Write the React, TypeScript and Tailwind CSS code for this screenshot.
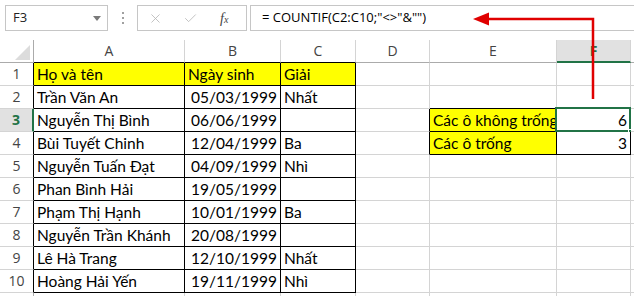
import { X, Check } from 'lucide-react'

const rows: [string, string, string][] = [
  ['Họ và tên', 'Ngày sinh', 'Giải'],
  ['Trần Văn An', '05/03/1999', 'Nhất'],
  ['Nguyễn Thị Bình', '06/06/1999', ''],
  ['Bùi Tuyết Chinh', '12/04/1999', 'Ba'],
  ['Nguyễn Tuấn Đạt', '04/09/1999', 'Nhì'],
  ['Phan Bình Hải', '19/05/1999', ''],
  ['Phạm Thị Hạnh', '10/01/1999', 'Ba'],
  ['Nguyễn Trần Khánh', '20/08/1999', ''],
  ['Lê Hà Trang', '12/10/1999', 'Nhất'],
  ['Hoàng Hải Yến', '19/11/1999', 'Nhì'],
]

const cols = ['A', 'B', 'C', 'D', 'E', 'F', '']

const cellFont = { fontFamily: 'Lato, "Noto Sans", sans-serif' }

function Cell({
  children,
  right = false,
  yellow = false,
  blackR = false,
  blackB = false,
  clip = false,
}: {
  children?: React.ReactNode
  right?: boolean
  yellow?: boolean
  blackR?: boolean
  blackB?: boolean
  clip?: boolean
}) {
  return (
    <div
      className={[
        'relative flex h-[23px] items-end whitespace-nowrap border-r border-b px-[3px] text-[15.5px] leading-[21px] text-black',
        right ? 'justify-end' : 'justify-start',
        yellow ? 'bg-[#ffff00]' : 'bg-white',
        blackR ? 'border-r-black' : 'border-r-[#d4d4d4]',
        blackB ? 'border-b-black' : 'border-b-[#d4d4d4]',
        clip ? 'overflow-hidden' : '',
      ].join(' ')}
      style={cellFont}
    >
      {children}
    </div>
  )
}

function RowHeader({ n, active = false, dark = false }: { n?: number; active?: boolean; dark?: boolean }) {
  return (
    <div
      className={[
        'flex h-[23px] items-center justify-center border-b border-b-[#d4d4d4] text-[14px] leading-none',
        active
          ? 'border-r-2 border-r-[#217346] bg-[#e1e1e1] font-bold text-[#217346]'
          : 'border-r bg-white text-[#444]',
        !active && dark ? 'border-r-black' : '',
        !active && !dark ? 'border-r-[#ababab]' : '',
      ].join(' ')}
      style={{ fontFamily: '"Open Sans", sans-serif' }}
    >
      {n}
    </div>
  )
}

export default function App() {
  return (
    <div className="relative h-[296px] w-[634px] overflow-hidden bg-white">
      {/* formula bar */}
      <div className="flex h-[40px] items-start pt-[5px] text-[#222]" style={{ fontFamily: '"Open Sans", sans-serif' }}>
        <div className="ml-[5px] flex h-[26px] w-[103px] items-center justify-between border border-[#c6c6c6] pl-[7px] pr-[6px] text-[13px]">
          <span>F3</span>
          <svg width="8" height="5" viewBox="0 0 8 5">
            <path d="M0 0 H8 L4 5 Z" fill="#7a7a7a" />
          </svg>
        </div>
        <div className="flex h-[26px] w-[29px] flex-col items-center justify-center gap-[3px]">
          <span className="h-[2px] w-[2px] bg-[#a0a0a0]" />
          <span className="h-[2px] w-[2px] bg-[#a0a0a0]" />
          <span className="h-[2px] w-[2px] bg-[#a0a0a0]" />
        </div>
        <div className="flex h-[26px] w-[110px] items-center border border-[#c6c6c6] pl-[10px]">
          <X size={15} strokeWidth={1.3} className="text-[#b5b5b5]" />
          <Check size={15} strokeWidth={1.3} className="ml-[20px] text-[#b5b5b5]" />
          <span
            className="ml-[22px] text-[14px] italic text-[#444]"
            style={{ fontFamily: '"Liberation Serif", serif' }}
          >
            f<span className="text-[10px]">x</span>
          </span>
        </div>
        <div className="ml-[3px] flex h-[26px] flex-1 items-center border-y border-l border-[#c6c6c6] pl-[11px] text-[13px] text-black">
          = COUNTIF(C2:C10;"&lt;&gt;"&amp;"")
        </div>
      </div>

      {/* sheet */}
      <div className="grid grid-cols-[34px_151px_96px_75px_74px_127px_74px_1fr]">
        {/* corner */}
        <div className="flex h-[23px] items-end justify-end border-r border-b border-r-[#ababab] border-b-[#ababab] pb-[2px] pr-[3px]">
          <svg width="15" height="15" viewBox="0 0 15 15">
            <path d="M15 0 V15 H0 Z" fill="#dcdcdc" />
          </svg>
        </div>
        {cols.map((c, i) => (
          <div
            key={i}
            className={[
              'flex h-[23px] items-center justify-center border-r border-r-[#d4d4d4] text-[14px] leading-none',
              c === 'F'
                ? 'border-b-2 border-b-[#217346] bg-[#e1e1e1] font-bold text-[#217346]'
                : 'border-b bg-white text-[#444]',
              c !== 'F' && i < 3 ? 'border-b-black' : '',
              c !== 'F' && i >= 3 ? 'border-b-[#ababab]' : '',
            ].join(' ')}
            style={{ fontFamily: '"Open Sans", sans-serif' }}
          >
            {c}
          </div>
        ))}

        {rows.map((r, idx) => {
          const n = idx + 1
          return (
            <div key={n} className="contents">
              <RowHeader n={n} active={n === 3} dark />
              <Cell yellow={n === 1} blackR blackB>
                {r[0]}
              </Cell>
              <Cell yellow={n === 1} right={n !== 1} blackR blackB>
                {r[1]}
              </Cell>
              <Cell yellow={n === 1} blackR blackB>
                {r[2]}
              </Cell>
              <Cell blackR={n === 3 || n === 4} />
              <Cell clip yellow={n === 3 || n === 4} blackR={n === 3 || n === 4} blackB={n >= 2 && n <= 4}>
                {n === 3 ? 'Các ô không trống' : n === 4 ? 'Các ô trống' : ''}
              </Cell>
              <Cell right blackR={n === 3 || n === 4} blackB={n >= 2 && n <= 4}>
                {n === 3 ? '6' : n === 4 ? '3' : ''}
                {n === 3 && (
                  <>
                    <span className="absolute left-[-2px] top-[-2px] right-[-1px] bottom-[-1px] border-2 border-[#217346]" />
                    <span className="absolute right-[-4px] bottom-[-4px] h-[6px] w-[6px] border border-white bg-[#217346]" />
                  </>
                )}
              </Cell>
              <Cell />
            </div>
          )
        })}
        {/* row 11, only its top edge is on screen */}
        <RowHeader />
        <Cell />
        <Cell />
        <Cell />
        <Cell />
        <Cell />
        <Cell />
        <Cell />
      </div>

      {/* red arrow overlay */}
      <svg className="pointer-events-none absolute left-0 top-0" width="634" height="296">
        <path d="M487 19 H593 V99" fill="none" stroke="#e00000" strokeWidth="2.5" />
        <path d="M473 19 L489 12.5 L489 25.5 Z" fill="#e00000" />
      </svg>
    </div>
  )
}
